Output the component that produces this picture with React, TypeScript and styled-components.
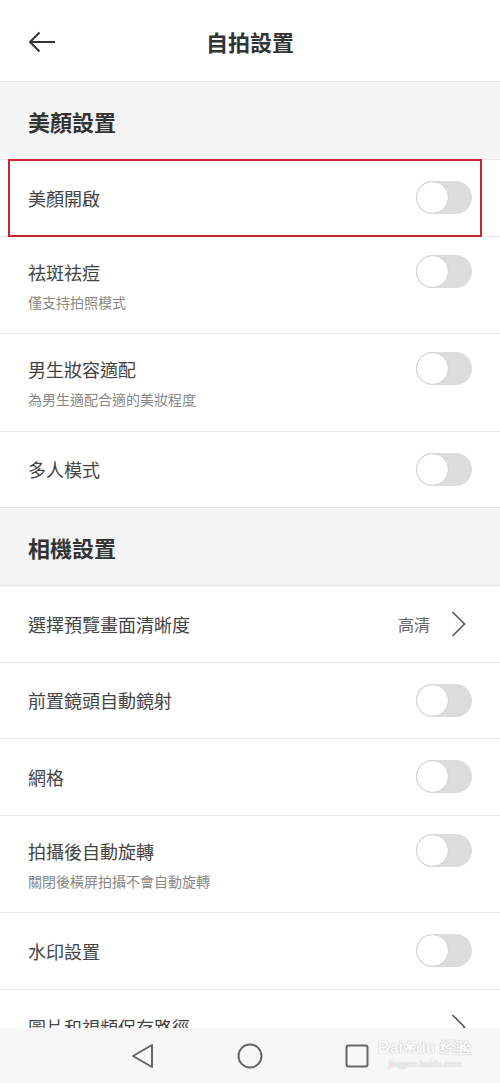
import React from 'react'
import styled, { createGlobalStyle } from 'styled-components'

// ----- Types -----

interface Setting {
  title: string
  sub?: string
  value?: string
  highlight?: boolean
}

interface Section {
  name: string
  items: Setting[]
}

const sections: Section[] = [
  {
    name: '美顏設置',
    items: [
      { title: '美顏開啟', highlight: true },
      { title: '祛斑祛痘', sub: '僅支持拍照模式' },
      { title: '男生妝容適配', sub: '為男生適配合適的美妝程度' },
      { title: '多人模式' },
    ],
  },
  {
    name: '相機設置',
    items: [
      { title: '選擇預覽畫面清晰度', value: '高清' },
      { title: '前置鏡頭自動鏡射' },
      { title: '網格' },
      { title: '拍攝後自動旋轉', sub: '關閉後橫屏拍攝不會自動旋轉' },
      { title: '水印設置' },
      { title: '圖片和視頻保存路徑', value: ' ' },
    ],
  },
]

// ----- Styles -----

const Global = createGlobalStyle`
  html, body {
    margin: 0;
    padding: 0;
    background: #fff;
  }
  body {
    font-family: "Noto Sans CJK TC", "Noto Sans", sans-serif;
  }
`

const Screen = styled.div`
  display: flex;
  flex-direction: column;
  width: 500px;
  height: 1083px;
  overflow: hidden;
  background: #fff;
`

const Header = styled.header`
  flex: none;
  display: flex;
  align-items: center;
  height: 81px;
  padding: 0 28px;
  border-bottom: 1px solid #e6e6e6;
  position: relative;
`

const BackButton = styled.button`
  display: flex;
  border: 0;
  padding: 0;
  margin-top: 2px;
  background: none;
  z-index: 1;
`

const HeaderTitle = styled.h1`
  position: absolute;
  left: 0;
  right: 0;
  margin: 0;
  text-align: center;
  font-size: 22px;
  font-weight: 700;
  color: #333;
`

const List = styled.main`
  flex: 1;
  overflow: hidden;
`

const SectionHead = styled.div`
  display: flex;
  align-items: center;
  height: 77px;
  padding: 0 28px;
  background: #f5f5f5;
  border-bottom: 1px solid #e6e6e6;
  font-size: 22px;
  font-weight: 700;
  color: #333;
`

const Row = styled.div<{ $sub: boolean }>`
  position: relative;
  display: flex;
  align-items: ${p => (p.$sub ? 'flex-start' : 'center')};
  min-height: ${p => (p.$sub ? '78.5px' : '75.5px')};
  padding: ${p => (p.$sub ? '18px 28px 0' : '0 28px')};
  border-bottom: 1px solid #e6e6e6;
`

const TextCol = styled.div`
  flex: 1;
  display: flex;
  flex-direction: column;
`

const Title = styled.div`
  font-size: 18px;
  line-height: 34px;
  color: #444;
`

const Sub = styled.div`
  margin-top: 3px;
  font-size: 14px;
  line-height: 20px;
  color: #888;
`

const Value = styled.span`
  font-size: 16px;
  color: #666;
  margin-right: 21px;
`

const Chevron = styled.svg`
  display: block;
  margin-right: 6px;
`

const Toggle = styled.div`
  position: relative;
  width: 56px;
  height: 33px;
  border-radius: 17px;
  background: #dcdcdc;

  &::after {
    content: '';
    position: absolute;
    left: 0;
    top: 0;
    width: 31px;
    height: 31px;
    border-radius: 50%;
    background: #fff;
    border: 1px solid #cfcfcf;
  }
`

const Highlight = styled.div`
  position: absolute;
  left: 8px;
  right: 18px;
  top: -1px;
  bottom: -1px;
  border: 2px solid #c9252f;
  pointer-events: none;
`

const NavBar = styled.nav`
  flex: none;
  position: relative;
  display: flex;
  align-items: center;
  justify-content: center;
  gap: 82px;
  height: 55px;
  background: #f7f7f7;
`

const NavIcon = styled.svg`
  display: block;
`

const Watermark = styled.div`
  position: absolute;
  right: 28px;
  top: 10px;
  display: flex;
  flex-direction: column;
  align-items: center;
  font-family: "Liberation Sans", sans-serif;
  color: #fbfbfb;
  text-shadow: 0 0 1px #bdbdbd, 0 0 1px #bdbdbd;
  pointer-events: none;
`

const WmMain = styled.span`
  font-size: 16px;
  font-weight: 700;
  line-height: 20px;
`

const WmUrl = styled.span`
  font-size: 9px;
  line-height: 12px;
`

// ----- Component Logic -----

const SettingRow: React.FC<{ item: Setting }> = ({ item }) => (
  <Row $sub={!!item.sub}>
    <TextCol>
      <Title>{item.title}</Title>
      {item.sub && <Sub>{item.sub}</Sub>}
    </TextCol>
    {item.value !== undefined ? (
      <>
        <Value>{item.value}</Value>
        <Chevron width="15" height="28" viewBox="0 0 15 28">
          <path d="M1.5 2 L13.5 14 L1.5 26" fill="none" stroke="#555" strokeWidth="1.6" />
        </Chevron>
      </>
    ) : (
      <Toggle />
    )}
    {item.highlight && <Highlight />}
  </Row>
)

const App: React.FC = () => (
  <Screen>
    <Global />
    <Header>
      <BackButton aria-label="back">
        <svg width="28" height="22" viewBox="0 0 28 22">
          <path d="M27 11 H2 M11.5 1.5 L2 11 L11.5 20.5" fill="none" stroke="#333" strokeWidth="2" />
        </svg>
      </BackButton>
      <HeaderTitle>自拍設置</HeaderTitle>
    </Header>
    <List>
      {sections.map(s => (
        <React.Fragment key={s.name}>
          <SectionHead>{s.name}</SectionHead>
          {s.items.map(item => (
            <SettingRow key={item.title} item={item} />
          ))}
        </React.Fragment>
      ))}
    </List>
    <NavBar>
      <NavIcon width="24" height="26" viewBox="0 0 24 26">
        <path d="M2 13 L21 2 L21 24 Z" fill="none" stroke="#666" strokeWidth="2" strokeLinejoin="round" />
      </NavIcon>
      <NavIcon width="26" height="26" viewBox="0 0 26 26">
        <circle cx="13" cy="13" r="11.5" fill="none" stroke="#666" strokeWidth="2" />
      </NavIcon>
      <NavIcon width="24" height="24" viewBox="0 0 24 24">
        <rect x="1.5" y="1.5" width="21" height="21" rx="2" fill="none" stroke="#666" strokeWidth="2" />
      </NavIcon>
      <Watermark>
        <WmMain>Bai❀du 经验</WmMain>
        <WmUrl>jingyan.baidu.com</WmUrl>
      </Watermark>
    </NavBar>
  </Screen>
)

export default App
